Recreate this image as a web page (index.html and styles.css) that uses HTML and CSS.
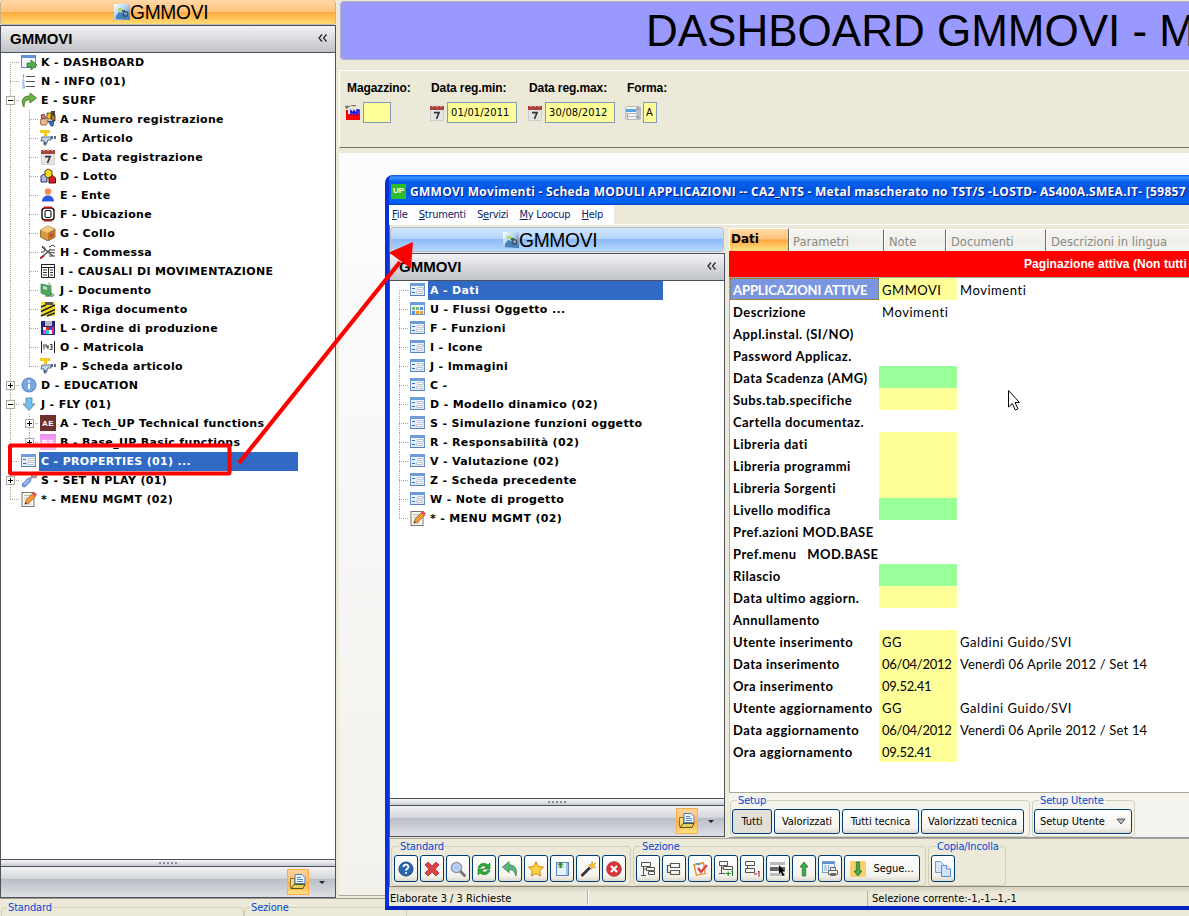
FILE: index.html
```html
<!DOCTYPE html>
<html lang="it">
<head>
<meta charset="utf-8">
<title>GMMOVI</title>
<link rel="stylesheet" href="styles.css">
</head>
<body>
<svg class="defs" width="0" height="0">
  <defs>
    <linearGradient id="gForm" x1="0" y1="0" x2="0" y2="1"><stop offset="0" stop-color="#f4f8fd"/><stop offset="1" stop-color="#dce9f9"/></linearGradient>
    <linearGradient id="gPhoto" x1="0" y1="0" x2="1" y2="1"><stop offset="0" stop-color="#ffffff"/><stop offset=".45" stop-color="#b4d4ee"/><stop offset="1" stop-color="#3f74ae"/></linearGradient>
    <linearGradient id="gPink" x1="0" y1="0" x2="0" y2="1"><stop offset="0" stop-color="#f08df0"/><stop offset="1" stop-color="#f9c4f9"/></linearGradient>
  </defs>
  <symbol id="form" viewBox="0 0 16 16"><rect x=".5" y="1.500" width="14" height="12" fill="url(#gForm)" stroke="#6b93c9"/><rect x="0" y="1" width="15" height="3" fill="#6f9bd8"/><path d="M0 13.500h15" stroke="#5a82bd"/><path d="M2 6.500h3M2 10.500h3" stroke="#2e6fc8"/><path d="M7.500 5.500h6v2h-6zM6.500 9.500h6v2h-6z" fill="#fff" stroke="#c2c5ca"/></symbol>
  <symbol id="flow" viewBox="0 0 16 16"><rect x=".5" y="1.500" width="14" height="12" fill="#eef5fd" stroke="#6b93c9"/><rect x="0" y="1" width="15" height="3" fill="#6f9bd8"/><path d="M2 6h3v3H2zM6 6h3v3H6z" fill="#7ab77a"/><path d="M10 6h3v3h-3z" fill="#4a90e0"/><path d="M2 10h3v3H2z" fill="#4a90e0"/><path d="M6 10h3v3H6zM10 10h3v3h-3z" fill="#f0a030"/></symbol>
  <symbol id="dash" viewBox="0 0 16 16"><rect x=".5" y="1.500" width="14" height="12" fill="#f2f6fc" stroke="#5c88c4"/><rect x="1" y="1" width="13" height="3" fill="#5f92d8"/><path d="M6 9h4V6l6 5-6 5v-3H6z" fill="#5aa84a" stroke="#2f7a26" stroke-width=".8"/></symbol>
  <symbol id="list" viewBox="0 0 16 16"><path d="M5 3.500h9M5 8.500h9M5 13.500h9" stroke="#555"/><path d="M1.500 2.500l1-1v4M1 7h2v1.500L1 10h2.500M1 12h2.500l-1.500 1.500h1.500V15H1" fill="none" stroke="#6fa4e0" stroke-width=".9"/></symbol>
  <symbol id="surf" viewBox="0 0 16 16"><path d="M3 15C-1 9 2 3.500 9 4V1l6.500 5L9 11V8C5 7.500 3 9 3 15z" fill="#6fb045" stroke="#3c7d22" stroke-width=".9"/></symbol>
  <symbol id="num" viewBox="0 0 16 16"><path d="M0 9l4-2 4 3-2 4H1z" fill="#e8b98c" stroke="#8a4a20" stroke-width=".8"/><path d="M1 4l3-1 2 4-4 1z" fill="#d87b7b" stroke="#5a2b1b" stroke-width=".8"/><path d="M7 2h4v6H7z" fill="#f4c420" stroke="#4a3200" stroke-width=".8"/><path d="M11 0h4v4h-4z" fill="#444"/><path d="M11 5l4-1v6l-3-1z" fill="#c07a30" stroke="#222" stroke-width=".8"/><path d="M8 10h6l-1 5h-2z" fill="#3a6fd0" stroke="#223" stroke-width=".6"/></symbol>
  <symbol id="tap" viewBox="0 0 16 16"><path d="M0 0h10v3H7v3H4V3H0z" fill="#f5c81c"/><path d="M2 7h9v3H8l-2 5H4V11H1z" fill="#c6d4e8" stroke="#4a5f86" stroke-width=".9"/><path d="M12 6v3M15 6v3M4 13h2" stroke="#26406e" stroke-width="1.500"/></symbol>
  <symbol id="cal" viewBox="0 0 16 16"><rect x="1.500" y="3" width="13" height="12.500" fill="#e4e4e5" stroke="#c4c4c4" stroke-width=".7"/><path d="M1 1h14v4H1z" fill="#a8443c"/><path d="M3 1h2M7 1h2M11 1h2" stroke="#e6c0ba" stroke-width="1.500"/><path d="M5 7.700h5L7.500 14" fill="none" stroke="#333" stroke-width="1.700"/></symbol>
  <symbol id="lots" viewBox="0 0 16 16"><path d="M1 8l3-2 3 2v6H1z" fill="#aab8f0" stroke="#223" stroke-width=".9"/><path d="M9 9l3-2 3.500 3v5H9z" fill="#d82020" stroke="#400" stroke-width=".9"/><path d="M5 3l3-2 4 2v5L8 10 5 8z" fill="#f8d820" stroke="#443300" stroke-width=".9"/></symbol>
  <symbol id="user" viewBox="0 0 16 16"><circle cx="8" cy="4.500" r="3.200" fill="#f58a4e"/><path d="M2 14.500c0-4 3-5 4-6h4c1 1 4 2 4 6z" fill="#2f58e0"/></symbol>
  <symbol id="barrel" viewBox="0 0 16 16"><rect x="2" y="2" width="12" height="12" rx="3" fill="#fff" stroke="#111" stroke-width="1.400"/><rect x="5" y="4.500" width="6" height="7" rx="1.500" fill="#fff" stroke="#111" stroke-width="1.100"/><path d="M4 1.500h8M4 14.500h8" stroke="#b01818" stroke-width="2"/></symbol>
  <symbol id="box" viewBox="0 0 16 16"><path d="M.5 5L8 1l7 3v8l-7 4-7.500-4z" fill="#d79a45" stroke="#8a5618" stroke-width=".8"/><path d="M.5 5L8 8l7-4-7-3z" fill="#f2ca80"/><path d="M8 8v8l7-4V4z" fill="#b87628"/><path d="M10 10l3-1.500v2L10 12z" fill="#c84030"/></symbol>
  <symbol id="tools" viewBox="0 0 16 16"><path d="M2 13L11 5M2 3l5 4 6 5" stroke="#555" stroke-width="1.400" fill="none"/><path d="M2 2l3 2-1 4H1M9 3l4-2 2 2M9 8l6 1M9 12h6M11 6h4" stroke="#444" fill="none"/><path d="M0 14.500l4-3" stroke="#c02020" stroke-width="2"/></symbol>
  <symbol id="table" viewBox="0 0 16 16"><rect x="1.500" y="1.500" width="13" height="13" fill="#fff" stroke="#222"/><path d="M1 4.500h14M8.500 5v9" stroke="#222"/><path d="M3 7h4M10 7h3M3 9.500h4M10 9.500h3M3 12h4M10 12h3" stroke="#333"/></symbol>
  <symbol id="greendoc" viewBox="0 0 16 16"><path d="M8 8l7 5-2 2H5z" fill="#aaa"/><path d="M1 2l10 2v9l-3 1-7-3z" fill="#4aa85c" stroke="#2e7d40" stroke-width=".7"/><path d="M3 4l4 1v3L3 7z" fill="#b8e6c0"/><path d="M8 1c3 0 3 3 2 7" fill="none" stroke="#888"/></symbol>
  <symbol id="stripes" viewBox="0 0 16 16"><rect x="1" y="1" width="14" height="14" fill="#f6df1c"/><path d="M1 6l5-2M1 10.500L15 4M1 15L15 8.500M7 15l8-3" stroke="#222" stroke-width="1.600"/><path d="M5 1h8v3H5z" fill="#555"/></symbol>
  <symbol id="floppy" viewBox="0 0 16 16"><rect x="1" y="1" width="14" height="14" fill="#26267c"/><path d="M5 1h7v5H5z" fill="#b9b9c8"/><path d="M3 7h3v3H3z" fill="#fff"/><path d="M6 7h3v3H6z" fill="#f02020"/><path d="M9 7h3v3H9z" fill="#3048ff"/><path d="M3 10h3v4H3z" fill="#e040e0"/><path d="M6 10h3v4H6z" fill="#20d0d0"/><path d="M9 10h3v4H9z" fill="#fff"/><path d="M12 7h2v7h-2z" fill="#e03060"/></symbol>
  <symbol id="serial" viewBox="0 0 16 16"><path d="M1.500 2v12M14.500 2v12" stroke="#222"/><path d="M3 6.500l1-1v5M6 5v3h2.500M8 6v4.500M10 5.500h2v5h-2M10.500 8h1.500" stroke="#333" fill="none"/></symbol>
  <symbol id="info" viewBox="0 0 16 16"><circle cx="8" cy="8" r="7.500" fill="#7ba6e4"/><circle cx="8" cy="8" r="6.800" fill="none" stroke="#5c8bd2"/><path d="M7 7h2v5H7zM7 3.500h2v2H7z" fill="#fff"/></symbol>
  <symbol id="down" viewBox="0 0 16 16"><path d="M5 2h6v6h3l-6 6.500L2 8h3z" fill="#6cc0f2" stroke="#6a8799" stroke-width=".9"/></symbol>
  <symbol id="ae" viewBox="0 0 16 16"><rect width="16" height="16" fill="#6d302c"/><text x="8" y="11" class="ic-txt" fill="#fff">AE</text></symbol>
  <symbol id="bs" viewBox="0 0 16 16"><rect width="16" height="16" fill="url(#gPink)"/><text x="8" y="11" class="ic-txt" fill="#fff">BS</text></symbol>
  <symbol id="spanner" viewBox="0 0 16 16"><path d="M3 13L8 8" stroke="#6d95dc" stroke-width="4.600" stroke-linecap="round"/><path d="M3 12.500L8 7.500" stroke="#b9d0f6" stroke-width="1.500"/><path d="M9 7l2-2M10 2l2 3 3 0 1-2" stroke="#9a9da3" stroke-width="2.300" fill="none"/></symbol>
  <symbol id="note" viewBox="0 0 16 16"><rect x="1" y="1.500" width="12" height="14" fill="#f7f7f2" stroke="#77776f"/><path d="M3 4.500h7M3 7h5M3 13h7" stroke="#bbb"/><path d="M4 13l1-4 7-7 3 3-7 7z" fill="#f29a38" stroke="#a35a12" stroke-width=".7"/><path d="M11 3l2-2 3 2.500-2 2z" fill="#e8485a"/><path d="M4 13l.5-2 1.500 1.500z" fill="#333"/></symbol>
  <symbol id="photo" viewBox="0 0 16 16"><rect width="16" height="16" fill="url(#gPhoto)"/><path d="M2 12l3-4 4 1 6 3v3H2z" fill="#4682ba"/><path d="M4 4h4v3H4z" fill="#b6d66a"/><path d="M8 6h3v2H8z" fill="#3c6a3c"/><circle cx="11.500" cy="10" r="2.300" fill="none" stroke="#3a5068" stroke-width="1.200"/></symbol>
  <symbol id="chev" viewBox="0 0 10 8"><path d="M4 .5L1 4l3 3.500M8.500 .5l-3 3.500 3 3.500" fill="none" stroke="#222" stroke-width="1.200"/></symbol>
  <symbol id="folder" viewBox="0 0 16 16"><path d="M.5 4.500h4v9h-4z" fill="#f2dc7c" stroke="#8a7420"/><path d="M5 .5h7l3 3v6H5z" fill="#eef6ff" stroke="#4c7fc0"/><path d="M7 3.500h4M7 5.500h6M7 7.500h6" stroke="#4f86c8"/><path d="M1 14.500L4 10.500h11l-2 4z" fill="#e6cb58" stroke="#4f4510" stroke-width=".9"/></symbol>
  <symbol id="factory" viewBox="0 0 16 16"><path d="M1 9V5h2v4z" fill="#e00"/><path d="M1 9h14v6H1z" fill="#f00"/><path d="M6 10V6l3 3V6l3 3V5h2v4" stroke="#1010e0" stroke-width="1.600" fill="none"/><path d="M0 1.500h5M6 .5h5M1 3h2" stroke="#777" stroke-width="1.300"/></symbol>
  <symbol id="rows" viewBox="0 0 16 16"><rect x=".5" y="1.500" width="15" height="13" rx="1" fill="#f3f3f3" stroke="#bbb"/><path d="M1 4h10v3H1z" fill="#56a5e6"/><path d="M11 2h4v12h-4z" fill="#b9bdc4"/><path d="M1 8.500h10M1 11.500h10" stroke="#bbb"/><path d="M2 10h1M2 13h1M12.500 4h1M12.500 12h1" stroke="#444"/></symbol>
  <symbol id="b-help" viewBox="0 0 16 16"><circle cx="8" cy="8" r="7" fill="#2a66ad" stroke="#184a86"/><path d="M5.500 6c0-3 5-3 5-.3C10.500 7.500 8 7.500 8 9.800M8 11v1.800" fill="none" stroke="#fff" stroke-width="1.800"/></symbol>
  <symbol id="b-x" viewBox="0 0 16 16"><path d="M1 4l3-3 4 4 4-4 3 3-4 4 4 4-3 3-4-4-4 4-3-3 4-4z" fill="#dd4247" stroke="#b7282d" stroke-width=".8"/></symbol>
  <symbol id="b-zoom" viewBox="0 0 16 16"><path d="M10 10l4.500 4.500" stroke="#777" stroke-width="3" stroke-linecap="round"/><circle cx="6.500" cy="6.500" r="5" fill="#cfe2fa" stroke="#8a97a8" stroke-width="1.600"/><circle cx="6.500" cy="6.500" r="3" fill="#a9cbf5"/></symbol>
  <symbol id="b-ref" viewBox="0 0 16 16"><path d="M2 7c1-5 7-6 10-3l2-2v6H8l2-2C8 4 5 5 4.500 7zM14 9c-1 5-7 6-10 3l-2 2V8h6l-2 2c2 2 5 1 5.500-1z" fill="#2fa637" stroke="#1c7c24" stroke-width=".6"/></symbol>
  <symbol id="b-back" viewBox="0 0 16 16"><path d="M.5 6L7 .8v3C13 4 15.500 8 14 15 12.500 10 11 8.800 7 8.500v3z" fill="#5fb27b" stroke="#3a8a56" stroke-width=".9"/></symbol>
  <symbol id="b-star" viewBox="0 0 16 16"><path d="M8 .8l2.300 4.700 5.200.7-3.800 3.600.9 5.200L8 12.500 3.400 15l.9-5.200L.5 6.200l5.200-.7z" fill="#ffd23e" stroke="#d08a10"/></symbol>
  <symbol id="b-page" viewBox="0 0 16 16"><rect x="2.500" y="1.500" width="12" height="13" fill="#e8f1fc" stroke="#5b83b7"/><path d="M3 2h7v5H3z" fill="#c4e2c4"/><path d="M6.500 1l2.500 3H7.500v3h-2V4H4z" fill="#26862c"/><path d="M13 2v12" stroke="#9ec0ea" stroke-width="2"/></symbol>
  <symbol id="b-wand" viewBox="0 0 16 16"><path d="M1.500 15L10 6.500" stroke="#333" stroke-width="2.600"/><path d="M12 0l.7 3L16 2l-2 2.500L16 7l-3-.8-1.500 2.300L11 5.500 8.500 4l3-.8z" fill="#f5c030" stroke="#d08d18" stroke-width=".5"/></symbol>
  <symbol id="b-stop" viewBox="0 0 16 16"><circle cx="8" cy="8" r="7.300" fill="#d6373d" stroke="#a9282d" stroke-width=".8"/><path d="M5 5l6 6M11 5l-6 6" stroke="#fff" stroke-width="2.200"/></symbol>
  <symbol id="b-tree" viewBox="0 0 16 16"><path d="M1.500 1.500h9v4h-9zM6.500 6.500h8v3h-8zM8.500 10.500h6v3h-6zM3.500 6v8.500M3.500 8h3M1 14.500h5" fill="none" stroke="#555"/></symbol>
  <symbol id="b-node" viewBox="0 0 16 16"><path d="M4.500 2.500h9v4h-9zM4.500 9.500h9v4h-9zM4 4.500H1.500v7H4" fill="none" stroke="#555" stroke-width="1.200"/></symbol>
  <symbol id="b-clip" viewBox="0 0 16 16"><path d="M1 3l11-2 2 12-10 2z" fill="#e79228"/><path d="M3 4.500l8-1.500 1.500 9L5 13.500z" fill="#f5f8ff"/><path d="M4 2h4v2H4z" fill="#4f9ad8"/><path d="M6 7l3 4 6-7" stroke="#dc4040" stroke-width="2.300" fill="none"/></symbol>
  <symbol id="b-plus" viewBox="0 0 16 16"><path d="M1.500 .5h8v4h-8zM5.500 5.500h9v3h-9zM3.500 4.500v8M1 12.500h6M3.500 7h2" fill="none" stroke="#555"/><path d="M8 12.500h4.500M10.200 10.500v4.500M13.500 10.500l1-1V15" stroke="#108010" fill="none"/></symbol>
  <symbol id="b-minus" viewBox="0 0 16 16"><path d="M1.500 .5h9v4h-9zM1.500 7.500h9v4h-9zM3.500 4.500v3" fill="none" stroke="#555"/><path d="M10 13h3M14 11l1-1v5.500" stroke="#a01010" fill="none"/></symbol>
  <symbol id="b-sel" viewBox="0 0 16 16"><path d="M0 1h15v3H0z" fill="#bbb"/><path d="M0 6h15v4H0z" fill="#666"/><path d="M0 12h15v3H0z" fill="#bbb"/><path d="M9 4v9l2-2 1.500 4 1.700-.8L12.500 10.500H15z" fill="#000"/></symbol>
  <symbol id="b-up" viewBox="0 0 16 16"><path d="M8 1l4 5h-2.300v9H6.300V6H4z" fill="#3fae4a" stroke="#23702a" stroke-width=".8"/></symbol>
  <symbol id="b-print" viewBox="0 0 16 16"><rect x=".5" y=".5" width="12" height="11" fill="#e9f2fc" stroke="#7d9cc8"/><path d="M1 1h11v2H1z" fill="#5f93d6"/><path d="M2 5h3M2 7h3M2 9h3M6.500 4v6" stroke="#8fb2dc"/><path d="M8.500 6.500h5v3h-5zM6.500 9.500h9v4h-9zM8.500 12.500h5v2h-5z" fill="#f3f3f3" stroke="#666"/></symbol>
  <symbol id="b-dn" viewBox="0 0 16 16"><rect width="16" height="16" rx="1" fill="#f8d070"/><path d="M8 15l4-5H9.700V1H6.300v9H4z" fill="#3fae4a" stroke="#23702a" stroke-width=".8"/></symbol>
  <symbol id="b-copy" viewBox="0 0 16 16"><path d="M.5 .5h5l3 3v8h-8z" fill="#d7e7fb" stroke="#6e9bdd"/><path d="M6.500 4.500h5l4 3.500v7.500h-9z" fill="#cfe2fa" stroke="#5b8ad2"/><path d="M11.500 4.500v3.500h4" fill="#fff" stroke="#5b8ad2"/></symbol>
</svg>

<div class="desktop">
  <div class="app">
    <aside class="side">
      <div class="brand brand-orange"><svg width="16" height="16"><use href="#photo"/></svg><span>GMMOVI</span></div>
      <div class="panel">
        <div class="panel-head"><b>GMMOVI</b><svg width="10" height="8"><use href="#chev"/></svg></div>
        <div class="tree">
          <div class="row"><i class="g t first"></i><svg><use href="#dash"/></svg><span>K - DASHBOARD</span></div>
          <div class="row"><i class="g t"></i><svg><use href="#list"/></svg><span>N - INFO (01)</span></div>
          <div class="row"><i class="g t"><em class="minus"></em></i><svg><use href="#surf"/></svg><span>E - SURF</span></div>
          <div class="row"><i class="g"></i><i class="g t"></i><svg><use href="#num"/></svg><span>A - Numero registrazione</span></div>
          <div class="row"><i class="g"></i><i class="g t"></i><svg><use href="#tap"/></svg><span>B - Articolo</span></div>
          <div class="row"><i class="g"></i><i class="g t"></i><svg><use href="#cal"/></svg><span>C - Data registrazione</span></div>
          <div class="row"><i class="g"></i><i class="g t"></i><svg><use href="#lots"/></svg><span>D - Lotto</span></div>
          <div class="row"><i class="g"></i><i class="g t"></i><svg><use href="#user"/></svg><span>E - Ente</span></div>
          <div class="row"><i class="g"></i><i class="g t"></i><svg><use href="#barrel"/></svg><span>F - Ubicazione</span></div>
          <div class="row"><i class="g"></i><i class="g t"></i><svg><use href="#box"/></svg><span>G - Collo</span></div>
          <div class="row"><i class="g"></i><i class="g t"></i><svg><use href="#tools"/></svg><span>H - Commessa</span></div>
          <div class="row"><i class="g"></i><i class="g t"></i><svg><use href="#table"/></svg><span>I - CAUSALI DI MOVIMENTAZIONE</span></div>
          <div class="row"><i class="g"></i><i class="g t"></i><svg><use href="#greendoc"/></svg><span>J - Documento</span></div>
          <div class="row"><i class="g"></i><i class="g t"></i><svg><use href="#stripes"/></svg><span>K - Riga documento</span></div>
          <div class="row"><i class="g"></i><i class="g t"></i><svg><use href="#floppy"/></svg><span>L - Ordine di produzione</span></div>
          <div class="row"><i class="g"></i><i class="g t"></i><svg><use href="#serial"/></svg><span>O - Matricola</span></div>
          <div class="row"><i class="g"></i><i class="g t last"></i><svg><use href="#tap"/></svg><span>P - Scheda articolo</span></div>
          <div class="row"><i class="g t"><em class="plus"></em></i><svg><use href="#info"/></svg><span>D - EDUCATION</span></div>
          <div class="row"><i class="g t"><em class="minus"></em></i><svg><use href="#down"/></svg><span>J - FLY (01)</span></div>
          <div class="row"><i class="g"></i><i class="g t"><em class="plus"></em></i><svg><use href="#ae"/></svg><span>A - Tech_UP Technical functions</span></div>
          <div class="row"><i class="g"></i><i class="g t last"><em class="plus"></em></i><svg><use href="#bs"/></svg><span>B - Base_UP Basic functions</span></div>
          <div class="row"><i class="g t"></i><svg><use href="#form"/></svg><span class="sel sel-out">C - PROPERTIES (01) ...</span></div>
          <div class="row"><i class="g t"><em class="plus"></em></i><svg><use href="#spanner"/></svg><span>S - SET N PLAY (01)</span></div>
          <div class="row"><i class="g t last"></i><svg><use href="#note"/></svg><span>* - MENU MGMT (02)</span></div>
        </div>
        <div class="grip"></div>
        <div class="panel-foot"><span class="hot"><svg width="16" height="16"><use href="#folder"/></svg></span><i class="caret"></i></div>
      </div>
    </aside>
    <main class="main">
      <div class="banner">DASHBOARD GMMOVI - M</div>
      <div class="filters">
        <div class="field f1"><label>Magazzino:</label><div><svg width="16" height="16"><use href="#factory"/></svg><span class="inp"></span></div></div>
        <div class="field f2"><label>Data reg.min:</label><div><svg width="16" height="16"><use href="#cal"/></svg><span class="inp">01/01/2011</span></div></div>
        <div class="field f2"><label>Data reg.max:</label><div><svg width="16" height="16"><use href="#cal"/></svg><span class="inp">30/08/2012</span></div></div>
        <div class="field f4"><label>Forma:</label><div><svg width="16" height="16"><use href="#rows"/></svg><span class="inp">A</span></div></div>
      </div>
      <div class="canvas"></div>
    </main>
  </div>
  <div class="dock">
    <fieldset class="d1"><legend>Standard</legend></fieldset>
    <fieldset class="d2"><legend>Sezione</legend></fieldset>
  </div>

  <section class="window">
    <div class="titlebar"><span class="up">UP</span><span class="title">GMMOVI Movimenti - Scheda MODULI APPLICAZIONI -- CA2_NTS - Metal mascherato no TST/S -LOSTD- AS400A.SMEA.IT- [59857</span></div>
    <nav class="menu"><span><u>F</u>ile</span><span><u>S</u>trumenti</span><span>S<u>e</u>rvizi</span><span><u>M</u>y Loocup</span><span><u>H</u>elp</span></nav>
    <div class="work">
      <aside class="side side-in">
        <div class="brand brand-blue"><svg width="16" height="16"><use href="#photo"/></svg><span>GMMOVI</span></div>
        <div class="panel">
          <div class="panel-head"><b>GMMOVI</b><svg width="10" height="8"><use href="#chev"/></svg></div>
          <div class="tree">
            <div class="row"><i class="g t first"></i><svg><use href="#form"/></svg><span class="sel sel-in">A - Dati</span></div>
            <div class="row"><i class="g t"></i><svg><use href="#flow"/></svg><span>U - Flussi Oggetto ...</span></div>
            <div class="row"><i class="g t"></i><svg><use href="#form"/></svg><span>F - Funzioni</span></div>
            <div class="row"><i class="g t"></i><svg><use href="#form"/></svg><span>I - Icone</span></div>
            <div class="row"><i class="g t"></i><svg><use href="#form"/></svg><span>J - Immagini</span></div>
            <div class="row"><i class="g t"></i><svg><use href="#form"/></svg><span>C -</span></div>
            <div class="row"><i class="g t"></i><svg><use href="#form"/></svg><span>D - Modello dinamico (02)</span></div>
            <div class="row"><i class="g t"></i><svg><use href="#form"/></svg><span>S - Simulazione funzioni oggetto</span></div>
            <div class="row"><i class="g t"></i><svg><use href="#form"/></svg><span>R - Responsabilità (02)</span></div>
            <div class="row"><i class="g t"></i><svg><use href="#form"/></svg><span>V - Valutazione (02)</span></div>
            <div class="row"><i class="g t"></i><svg><use href="#form"/></svg><span>Z - Scheda precedente</span></div>
            <div class="row"><i class="g t"></i><svg><use href="#form"/></svg><span>W - Note di progetto</span></div>
            <div class="row"><i class="g t last"></i><svg><use href="#note"/></svg><span>* - MENU MGMT (02)</span></div>
          </div>
          <div class="grip"></div>
          <div class="panel-foot"><span class="hot"><svg width="16" height="16"><use href="#folder"/></svg></span><i class="caret"></i></div>
        </div>
      </aside>
      <div class="detail">
        <div class="tabs"><span class="tab on">Dati</span><span class="tab t2">Parametri</span><span class="tab t3">Note</span><span class="tab t4">Documenti</span><span class="tab t5">Descrizioni in lingua</span></div>
        <div class="alert">Paginazione attiva (Non tutti</div>
        <div class="grid">
          <div class="gr"><b class="cur">APPLICAZIONI ATTIVE</b><span class="y">GMMOVI</span><span>Movimenti</span></div>
          <div class="gr"><b>Descrizione</b><span>Movimenti</span></div>
          <div class="gr"><b>Appl.instal. (SI/NO)</b></div>
          <div class="gr"><b>Password Applicaz.</b></div>
          <div class="gr"><b>Data Scadenza (AMG)</b><span class="n"></span></div>
          <div class="gr"><b>Subs.tab.specifiche</b><span class="y"></span></div>
          <div class="gr"><b>Cartella documentaz.</b></div>
          <div class="gr"><b>Libreria dati</b><span class="y"></span></div>
          <div class="gr"><b>Libreria programmi</b><span class="y"></span></div>
          <div class="gr"><b>Libreria Sorgenti</b><span class="y"></span></div>
          <div class="gr"><b>Livello modifica</b><span class="n"></span></div>
          <div class="gr"><b>Pref.azioni MOD.BASE</b></div>
          <div class="gr"><b>Pref.menu &nbsp; MOD.BASE</b></div>
          <div class="gr"><b>Rilascio</b><span class="n"></span></div>
          <div class="gr"><b>Data ultimo aggiorn.</b><span class="y"></span></div>
          <div class="gr"><b>Annullamento</b></div>
          <div class="gr"><b>Utente inserimento</b><span class="y">GG</span><span>Galdini Guido/SVI</span></div>
          <div class="gr"><b>Data inserimento</b><span class="y date">06/04/2012</span><span class="long">Venerdì 06 Aprile 2012 / Set 14</span></div>
          <div class="gr"><b>Ora inserimento</b><span class="y date">09.52.41</span></div>
          <div class="gr"><b>Utente aggiornamento</b><span class="y">GG</span><span>Galdini Guido/SVI</span></div>
          <div class="gr"><b>Data aggiornamento</b><span class="y date">06/04/2012</span><span class="long">Venerdì 06 Aprile 2012 / Set 14</span></div>
          <div class="gr"><b>Ora aggiornamento</b><span class="y date">09.52.41</span></div>
        </div>
        <div class="setup">
          <fieldset class="s1"><legend>Setup</legend><button class="w40 pressed">Tutti</button><button class="w66">Valorizzati</button><button class="w77">Tutti tecnica</button><button class="w103">Valorizzati tecnica</button></fieldset>
          <fieldset class="s2"><legend>Setup Utente</legend><button class="w98">Setup Utente<svg width="10" height="7" viewBox="0 0 10 7"><path d="M1 1h8L5 6z" fill="#bbb" stroke="#555"/></svg></button></fieldset>
        </div>
      </div>
    </div>
    <div class="toolbar">
      <fieldset class="t-std"><legend>Standard</legend>
        <button><svg><use href="#b-help"/></svg></button><button><svg><use href="#b-x"/></svg></button><button><svg><use href="#b-zoom"/></svg></button><button><svg><use href="#b-ref"/></svg></button><button><svg><use href="#b-back"/></svg></button><button><svg><use href="#b-star"/></svg></button><button><svg><use href="#b-page"/></svg></button><button><svg><use href="#b-wand"/></svg></button><button><svg><use href="#b-stop"/></svg></button>
      </fieldset>
      <fieldset class="t-sez"><legend>Sezione</legend>
        <button><svg><use href="#b-tree"/></svg></button><button><svg><use href="#b-node"/></svg></button><button><svg><use href="#b-clip"/></svg></button><button><svg><use href="#b-plus"/></svg></button><button><svg><use href="#b-minus"/></svg></button><button><svg><use href="#b-sel"/></svg></button><button><svg><use href="#b-up"/></svg></button><button><svg><use href="#b-print"/></svg></button><button class="wide"><svg><use href="#b-dn"/></svg>Segue...</button>
      </fieldset>
      <fieldset class="t-cop"><legend>Copia/Incolla</legend><button><svg><use href="#b-copy"/></svg></button></fieldset>
    </div>
    <div class="status"><span class="st1">Elaborate 3 / 3 Richieste</span><span class="st2"></span><span class="st3">Selezione corrente:-1,-1--1,-1</span></div>
  </section>

  <svg class="marks" width="1189" height="916" viewBox="0 0 1189 916">
    <rect x="10" y="445.500" width="219.500" height="28" rx="1" fill="none" stroke="#f00" stroke-width="4"/>
    <path d="M239 463L400 262" stroke="#f00" stroke-width="4.200"/>
    <path d="M413 242L389 252.500L411 268.500z" fill="#f00"/>
    <path d="M1008.500 390.500v16.500l3.800-3.500 3 6.500 2.700-1.200-3-6.300h4.500z" fill="#fff" stroke="#000"/>
  </svg>
</div>
</body>
</html>
```
FILE: styles.css
```css
* { box-sizing: border-box; }
body { margin: 0; font: 11px "DejaVu Sans Condensed", "DejaVu Sans", sans-serif; color: #000; }
.defs { position: absolute; }
.ic-txt { font: bold 8px "Liberation Sans", sans-serif; text-anchor: middle; }
.desktop { position: relative; width: 1189px; height: 916px; overflow: hidden; background: #ece9d8; display: flex; flex-direction: column; }
.app { display: flex; height: 898px; }

/* side panel */
.side { width: 336px; height: 898px; display: flex; flex-direction: column; flex: none; }
.brand { height: 25px; border: 1px solid #c9b48a; border-top: 0; border-radius: 4px; border-bottom-color: #b9b9b9; display: flex; justify-content: center; align-items: center; font: 20px/24px "Liberation Sans", sans-serif; padding-right: 10px; letter-spacing: -.3px; }
.brand span { transform: scaleX(.96); transform-origin: 0 50%; }
.brand-orange { background: linear-gradient(#ffd9a8 0, #ffc27a 48%, #ffa73c 50%, #ffdc74 100%); box-shadow: 0 1px #ffd878; }
.brand-blue { background: linear-gradient(#d3e5ff 0, #b4d3fd 48%, #8db9f8 50%, #b5d8fc 100%); border-color: #b5bfd0; border-top: 1px solid #b5bfd0; }
.panel { flex: 1; display: flex; flex-direction: column; border: 1px solid #4b505c; background: #fff; min-height: 0; }
.panel-head { height: 27px; flex: none; display: flex; align-items: center; justify-content: space-between; padding: 0 7px 2px 9px; background: linear-gradient(#f3f3f5, #bfc2c8); border-bottom: 1px solid #4b505c; font: 15px "Liberation Sans", sans-serif; }
.tree { flex: 1; font: bold 11px/19px "DejaVu Sans", sans-serif; letter-spacing: .34px; }
.row { display: flex; height: 19px; white-space: pre; }
.row svg { width: 16px; height: 16px; margin: 1px 2px 0 1px; flex: none; }
.row span { padding-left: 2px; line-height: 20px; height: 19px; }
.sel { background: #316ac5; color: #fff; }
.sel-out { width: 259px; }
.sel-in { width: 235px; }
.g { position: relative; width: 19px; height: 19px; flex: none; background: repeating-linear-gradient(#aca899 0 1px, transparent 1px 2px) 9px 0 / 1px 20px no-repeat; }
.g.t { background: repeating-linear-gradient(#aca899 0 1px, transparent 1px 2px) 9px 0 / 1px 20px no-repeat, repeating-linear-gradient(90deg, #aca899 0 1px, transparent 1px 2px) 9px 9px / 10px 1px no-repeat; }
.g.first { background-position: 9px 9px, 9px 9px; }
.g.last { background-size: 1px 10px, 10px 1px; }
.plus, .minus { position: absolute; left: 5px; top: 5px; width: 9px; height: 9px; border: 1px solid #aca899; background: linear-gradient(#000, #000) 1px 3px / 5px 1px no-repeat #fff; }
.plus { background: linear-gradient(#000, #000) 1px 3px / 5px 1px no-repeat, linear-gradient(#000, #000) 3px 1px / 1px 5px no-repeat #fff; }
.grip { height: 8px; flex: none; border: solid #4b505c; border-width: 1px 0; background: repeating-linear-gradient(90deg, #8b8e96 0 2px, transparent 2px 4px) 50% 2px / 18px 2px no-repeat, linear-gradient(#f6f6f8, #c9ccd4); }
.panel-foot { height: 30px; flex: none; display: flex; justify-content: flex-end; align-items: center; gap: 10px; padding-right: 10px; background: linear-gradient(#f2f2f4 0, #d5d7dc 38%, #b8bcc5 40%, #dfe0e4 100%); }
.hot { width: 22px; height: 26px; border: 1px solid #ffae45; background: linear-gradient(#ffd5a0 0, #ffbb6c 48%, #ffa73c 50%, #ffe184 100%); display: flex; align-items: center; justify-content: center; }
.caret { width: 0; border: 3px solid transparent; border-top-color: #222; border-bottom: 0; }

/* dashboard */
.main { flex: 1; padding: 1px 0 0 3px; display: flex; flex-direction: column; min-width: 0; }
.banner { margin-left: 1px; height: 59px; flex: none; border: 1px solid #b5b2c4; border-right: 0; border-radius: 4px 0 0 4px; background: #99f; padding-left: 305px; font: 44px/58px "Liberation Sans", sans-serif; white-space: nowrap; overflow: hidden; }
.filters { margin-top: 10px; height: 78px; flex: none; border: solid #fff; border-width: 1px 0 0 1px; border-bottom: 1px solid #76725f; display: flex; padding: 10px 0 0 5px; }
.field { display: flex; flex-direction: column; gap: 6px; }
.field label { font: bold 12px/15px "Liberation Sans", sans-serif; padding-left: 2px; white-space: nowrap; letter-spacing: -.1px; }
.field div { display: flex; gap: 2px; align-items: center; }
.f1 { width: 84px; } .f2 { width: 98px; }
.inp { height: 21px; width: 70px; border: 1px solid #7f9db9; background: #ff9; line-height: 19px; padding-left: 3px; letter-spacing: .15px; }
.f1 .inp { width: 28px; } .f4 .inp { width: 14px; padding-left: 2px; }
.canvas { flex: 1; margin: 5px 0 2px; background: linear-gradient(#fcfcfe, #f2f1ec); border-bottom: 1px solid #aca899; }
.dock { height: 18px; flex: none; display: flex; border-top: 1px solid #9c998c; padding: 2px 1px; }
fieldset { margin: 0; padding: 0; border: 1px solid #cfcfb8; border-radius: 4px; min-width: 0; }
legend { color: #0046d5; line-height: 13px; padding: 0 1px; margin-left: 5px; letter-spacing: -.15px; }
.d1 { width: 243px; height: 40px; } .d2 { width: 163px; height: 40px; }

/* application window */
.window { position: absolute; left: 385px; top: 175px; width: 810px; height: 735px; border: solid #0a3fe0; border-width: 0 0 4px 4px; border-radius: 8px 0 0 0; background: #ece9d8; box-shadow: inset 1px 0 #2f7bf5; overflow: hidden; display: flex; flex-direction: column; border-left-color: #0831d9; border-bottom-color: #0022c0; }
.titlebar { height: 30px; flex: none; margin-left: -4px; padding: 3px 0 0 6px; display: flex; align-items: center; background: linear-gradient(#0058e6 0, #3a93ff 8%, #0a61ee 22%, #0055e0 50%, #0062f8 80%, #0060f5 92%, #0044c8 100%); }
.up { width: 15px; height: 15px; background: #2bbd2b; color: #fff; font: bold 8px/14px "Liberation Sans", sans-serif; text-align: center; }
.title { margin-left: 4px; padding-top: 1px; font: bold 12px/16px "Open Sans", sans-serif; letter-spacing: .28px; color: #fff; text-shadow: 1px 1px #0a1883; white-space: nowrap; }
.menu { height: 20px; flex: none; display: flex; color: #0a246a; line-height: 20px; letter-spacing: -.25px; border-bottom: 1px solid #fff; background: linear-gradient(#fff, #fff) 0 0 / 225px 19px no-repeat; padding-left: 3px; }
.menu span { margin-right: 11.3px; }
.work { height: 613px; flex: none; display: flex; padding-top: 1px; }
.side-in { width: 336px; height: 611px; }
.side-in .brand { margin: 1px; height: 25px; }
.detail { flex: 1; margin-left: 4px; display: flex; flex-direction: column; min-width: 0; }
.tabs { display: flex; height: 25px; padding-top: 2px; flex: none; font: 11.500px/24px "DejaVu Sans", sans-serif; overflow: hidden; }
.tab { flex: none; border: solid #fff; border-width: 1px 0 0 1px; border-right: 1px solid #6b6b62; background: linear-gradient(#f6f5f0, #efeee8 60%, #f6f5f0); color: #8a8a84; padding-left: 4px; margin-top: 1px; white-space: nowrap; }
.tab.on { width: 60px; background: linear-gradient(#ffd9a8 0, #ffc27a 45%, #ffa73c 50%, #ffe184 100%); color: #000; font-weight: bold; font-size: 12px; line-height: 20px; padding-left: 1px; margin-top: 0; }
.t2 { width: 95px; padding-left: 3px; } .t3 { width: 62px; } .t4 { width: 100px; } .t5 { width: 200px; }
.alert { height: 26px; flex: none; background: #f00; color: #fff; font: bold 12px/26px "Liberation Sans", sans-serif; letter-spacing: .05px; padding-left: 295px; white-space: nowrap; }
.grid { height: 516px; flex: none; background: #fff; border: solid #aca899; border-width: 1px 0 1px 1px; }
.gr { display: flex; height: 22px; font: 13px/24px Lato, sans-serif; white-space: nowrap; }
.gr b { width: 149px; padding-left: 3px; letter-spacing: .45px; }
.gr span { width: 78px; padding-left: 3px; letter-spacing: .55px; }
.gr span + span { width: auto; }
.gr .date { letter-spacing: -.25px; }
.gr .long { letter-spacing: .18px; }
.y { background: #ff9; } .n { background: #9f9; }
.gr b.cur { background: #7b96e0; color: #fff; border: 1px dotted #846a1f; line-height: 22px; padding-left: 2px; letter-spacing: -.1px; }
.setup { flex: 1; background: #f4f3ee; display: flex; gap: 2px; padding: 1px 0 0 1px; border-bottom: 1px solid #8f9a9e; overflow: hidden; }
.setup fieldset, .toolbar fieldset { display: flex; gap: 2px; }
.setup fieldset { height: 43px; padding-left: 1px; }
.s1 { width: 300px; } .s2 { width: 103px; }
.setup button { height: 25px; margin-top: 2px; }
button { font: 11px "DejaVu Sans Condensed", sans-serif; letter-spacing: -.05px; border: 1px solid #003c74; border-radius: 3px; background: linear-gradient(#fff, #f3f2ec 80%, #dcd8cc); padding: 0; width: 24px; height: 27px; display: flex; align-items: center; justify-content: center; white-space: nowrap; flex: none; color: #000; }
.pressed { background: #e1e0d8; }
.w40 { width: 40px; } .w66 { width: 66px; } .w77 { width: 77px; } .w103 { width: 103px; }
.w98 { width: 98px; gap: 11px; }
.toolbar { height: 49px; flex: none; display: flex; gap: 2px; border-top: 1px solid #aca899; border-bottom: 1px solid #8a8778; padding: 1px 0 0 2px; }
.toolbar fieldset { height: 46px; padding: 2px 0 0 2px; }
.toolbar svg { width: 16px; height: 16px; }
.t-std { width: 240px; } .t-sez { width: 293px; } .t-cop { width: 78px; }
.wide { width: 76px; gap: 7px; }
.status { flex: 1; display: flex; align-items: center; line-height: 18px; padding-top: 2px; background: linear-gradient(#d5d2c2, #ece9d8 30%); white-space: nowrap; }
.st1 { width: 198px; padding: 1px 0 0 1px; } .st2 { width: 280px; border-left: 1px solid #b5b29f; box-shadow: inset 1px 0 #fff; align-self: stretch; margin: 1px 0 3px; }
.st3 { border-left: 1px solid #b5b29f; padding: 1px 0 0 4px; line-height: 14px; }
.marks { position: absolute; left: 0; top: 0; }
```
